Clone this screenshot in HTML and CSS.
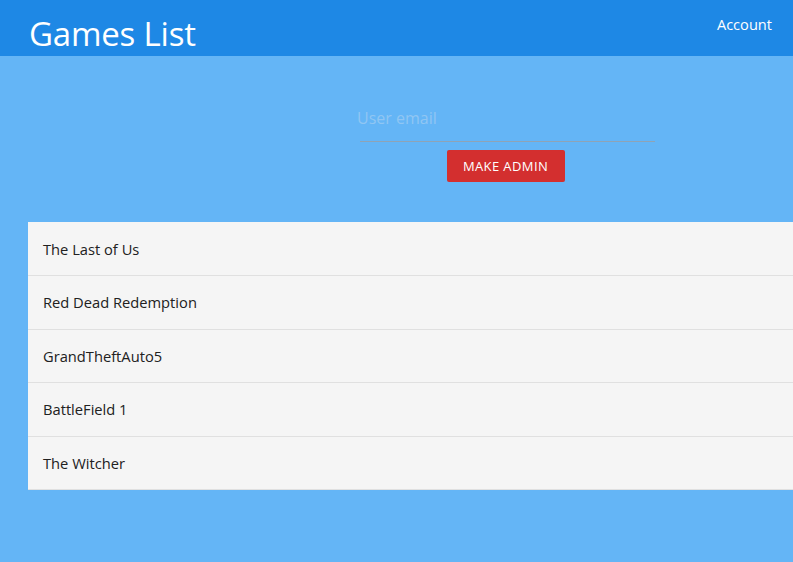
FILE: index.html
```html
<!DOCTYPE html>
<html>
<head>
<meta charset="utf-8">
<link rel="stylesheet" href="styles.css">
</head>
<body>
<header class="appbar">
  <h1 class="title">Games List</h1>
  <a class="account">Account</a>
</header>
<main class="content">
  <form class="admin-form">
    <div class="field">
      <input class="email" type="text" placeholder="User email">
    </div>
    <button class="make-admin" type="button">Make admin</button>
  </form>
  <ul class="games">
    <li class="game">The Last of Us</li>
    <li class="game">Red Dead Redemption</li>
    <li class="game">GrandTheftAuto5</li>
    <li class="game">BattleField 1</li>
    <li class="game">The Witcher</li>
  </ul>
</main>
</body>
</html>
```
FILE: styles.css
```css
html, body {
  margin: 0;
  padding: 0;
  height: 100%;
  overflow: hidden;
}
body {
  background: #64b5f6;
  font-family: "Open Sans", "Noto Sans", sans-serif;
  color: #212121;
}
.appbar {
  height: 56px;
  background: #1e88e5;
  display: flex;
  justify-content: space-between;
  align-items: flex-start;
  padding: 0 21px 0 29px;
}
.title {
  margin: 0;
  font-weight: 400;
  font-size: 33px;
  line-height: 56px;
  color: #fff;
  letter-spacing: -0.2px;
  padding-top: 6px;
  height: 50px;
}
.account {
  color: #fff;
  font-size: 14.6px;
  line-height: 16px;
  margin-top: 16px;
}
.content {
  padding-top: 40px;
}
.admin-form {
  display: flex;
  flex-direction: column;
  align-items: center;
  margin-left: 360px;
  width: 295px;
}
.field {
  width: 295px;
  height: 46px;
  border-bottom: 1px solid #8fa3b5;
  box-sizing: border-box;
}
.email {
  box-sizing: border-box;
  width: 298px;
  height: 44px;
  border: none;
  background: transparent;
  font-family: inherit;
  font-size: 16px;
  padding: 0;
  margin: 0 0 0 -3px;
  outline: none;
}
.email::placeholder {
  color: #90c6f3;
  opacity: 1;
}
.make-admin {
  margin: 8px 0 0 -4px;
  width: 118px;
  height: 32px;
  background: #d32f2f;
  color: #fff;
  border: none;
  border-radius: 2px;
  font-family: inherit;
  font-size: 13px;
  text-transform: uppercase;
  letter-spacing: 0.4px;
  padding: 0;
}
.games {
  list-style: none;
  margin: 40px 0 0 28px;
  padding: 0;
  width: 800px;
  background: #f5f5f5;
  border-bottom: 1px solid #e0e0e0;
}
.game {
  box-sizing: border-box;
  height: 53.6px;
  display: flex;
  align-items: center;
  padding-left: 15px;
  font-size: 14.7px;
  border-top: 1px solid #e0e0e0;
}
.game:first-child {
  border-top: none;
  height: 53px;
}
```
